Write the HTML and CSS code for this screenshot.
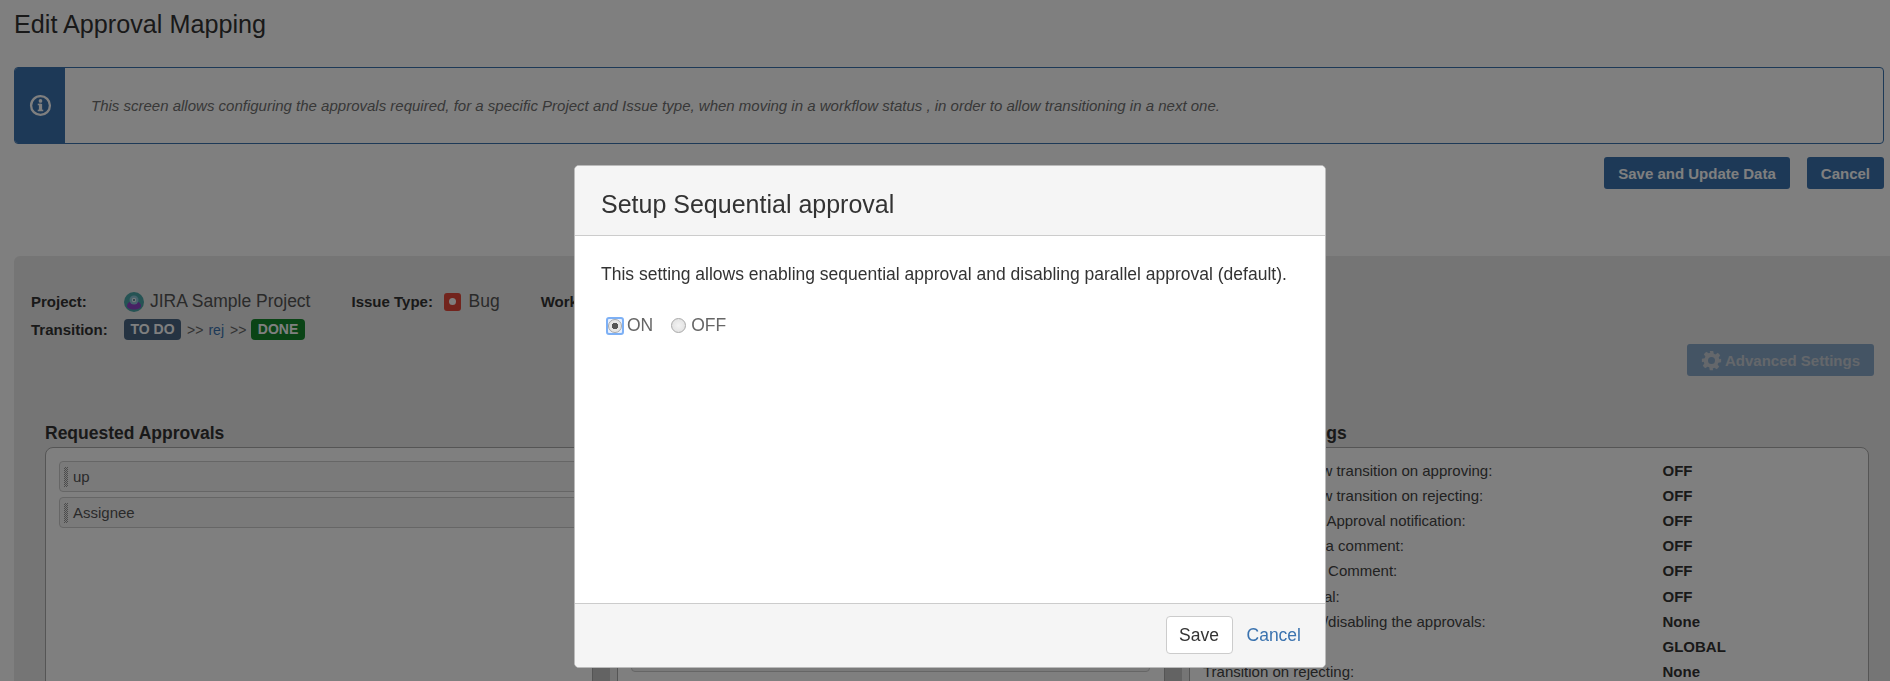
FILE: index.html
```html
<!DOCTYPE html>
<html lang="en">
<head>
<meta charset="utf-8">
<title>Edit Approval Mapping</title>
<link rel="stylesheet" href="styles.css">
</head>
<body>
<main class="page">
  <h1 class="page-title">Edit Approval Mapping</h1>
  <div class="info">
    <div class="info-icon">
      <svg width="23" height="23" viewBox="0 0 20 20"><circle cx="10" cy="10" r="8.2" fill="none" stroke="#fff" stroke-width="2"/><rect x="8.600" y="8.600" width="2.800" height="6" fill="#fff"/><rect x="7.600" y="8.400" width="3" height="1.400" fill="#fff"/><rect x="7.600" y="13.600" width="4.800" height="1.400" fill="#fff"/><circle cx="10" cy="6" r="1.600" fill="#fff"/></svg>
    </div>
    <p class="info-text">This screen allows configuring the approvals required, for a specific Project and Issue type, when moving in a workflow status , in order to allow transitioning in a next one.</p>
  </div>
  <div class="actions">
    <button class="btn-primary">Save and Update Data</button>
    <button class="btn-primary">Cancel</button>
  </div>
  <section class="panel">
    <div class="meta-row">
      <span class="meta-label label-project">Project:</span>
      <svg class="avatar" width="20" height="20" viewBox="0 0 20 20"><circle cx="10" cy="10" r="10" fill="#4aa6a8"/><path d="M3 14c0-3 3-5 7-5s7 2 7 5c0 2-3 3.500-7 3.500S3 16 3 14z" fill="#8e44c8"/><circle cx="10" cy="8" r="4.500" fill="#8fc6d8"/><circle cx="10" cy="8" r="2.200" fill="#e8f2f6"/><circle cx="10" cy="8" r="1" fill="#3f6d88"/></svg>
      <span class="meta-value">JIRA Sample Project</span>
      <span class="meta-label label-issue">Issue Type:</span>
      <span class="bug"><span class="bug-dot"></span></span>
      <span class="meta-value">Bug</span>
      <span class="meta-label label-work">Workflow:</span>
    </div>
    <div class="meta-row meta-row-second">
      <span class="meta-label label-project">Transition:</span>
      <span class="status status-todo">TO DO</span>
      <span class="arrows">&gt;&gt;</span>
      <a class="rej">rej</a>
      <span class="arrows">&gt;&gt;</span>
      <span class="status status-done">DONE</span>
    </div>
    <div class="adv-row">
      <button class="btn-adv">
        <svg width="21" height="21" viewBox="0 0 24 24"><path fill-rule="evenodd" d="M10 1h4l.6 3.200 1.900.8 2.700-1.800 2.800 2.800-1.800 2.700.8 1.900L23 10v4l-3.200.6-.8 1.900 1.800 2.700-2.800 2.800-2.700-1.800-1.900.8L14 23h-4l-.6-3.200-1.900-.8-2.700 1.800-2.800-2.800 1.800-2.700-.8-1.900L1 14v-4l3.200-.6.8-1.900-1.800-2.700 2.800-2.800 2.700 1.800 1.900-.8zM12 8a4 4 0 1 0 0 8 4 4 0 0 0 0-8z" fill="currentColor"/></svg>
        Advanced Settings
      </button>
    </div>
    <div class="columns">
      <div class="col col-side">
        <h3 class="col-title">Requested Approvals</h3>
        <div class="box">
          <div class="item"><span class="grip"></span>up</div>
          <div class="item"><span class="grip"></span>Assignee</div>
        </div>
      </div>
      <div class="strip"></div>
      <div class="col col-side">
        <div class="col-title"></div>
        <div class="box">
          <div class="item"></div>
          <div class="item"></div>
          <div class="item"></div>
          <div class="item"></div>
          <div class="item"></div>
          <div class="item"></div>
        </div>
      </div>
      <div class="strip"></div>
      <div class="col col-main">
        <h3 class="col-title col-title-right">Approval Settings</h3>
        <div class="box box-settings">
          <div class="setting"><span>Execute a workflow transition on approving:</span><b>OFF</b></div>
          <div class="setting"><span>Execute a workflow transition on rejecting:</span><b>OFF</b></div>
          <div class="setting"><span>Send out Request Approval notification:</span><b>OFF</b></div>
          <div class="setting"><span>Approver can add a comment:</span><b>OFF</b></div>
          <div class="setting"><span>Rejecting requires Comment:</span><b>OFF</b></div>
          <div class="setting"><span>Sequential approval:</span><b>OFF</b></div>
          <div class="setting"><span>Rules for enabling/disabling the approvals:</span><b>None</b></div>
          <div class="setting"><span>Scope:</span><b>GLOBAL</b></div>
          <div class="setting"><span>Transition on rejecting:</span><b>None</b></div>
        </div>
      </div>
    </div>
  </section>
</main>
<div class="overlay"></div>
<div class="modal">
  <header class="modal-head"><h2 class="modal-title">Setup Sequential approval</h2></header>
  <div class="modal-body">
    <p class="modal-text">This setting allows enabling sequential approval and disabling parallel approval (default).</p>
    <div class="radios">
      <label class="radio-label"><span class="radio-focus"><input class="radio" type="radio" name="seq" checked></span><span>ON</span></label>
      <label class="radio-label radio-off"><input class="radio" type="radio" name="seq"><span>OFF</span></label>
    </div>
  </div>
  <footer class="modal-foot">
    <button class="btn-save">Save</button>
    <a class="link-cancel">Cancel</a>
  </footer>
</div>
</body>
</html>
```
FILE: styles.css
```css
* { box-sizing: border-box; }
html, body { margin: 0; height: 681px; overflow: hidden; background: #fff; }
body { font-family: "Liberation Sans", Arial, sans-serif; font-size: 15px; color: #333; }
button { font-family: inherit; }

.page { padding-left: 14px; }
.page-title { margin: 10px 0 0; font-size: 25.2px; line-height: 28px; font-weight: 400; color: #333; }

.info { display: flex; height: 77px; margin: 29px 6px 0 0; border: 1px solid #3b73af; border-radius: 4px; overflow: hidden; }
.info-icon { width: 50px; background: #3b73af; display: flex; align-items: center; justify-content: center; }
.info-text { margin: 0; padding-left: 26px; align-self: center; font-size: 15px; font-style: italic; color: #707070; }

.actions { display: flex; justify-content: flex-end; gap: 17px; margin: 13px 6px 0 0; }
.btn-primary { height: 32px; padding: 0 14px; border: 0; border-radius: 3px; background: #3b73af; color: #fff; font-size: 15px; font-weight: 700; }

.panel { margin-top: 67px; height: 600px; padding: 33px 0 0 17px; background: #eaeaea; border-radius: 6px 0 0 0; }
.meta-row { display: flex; align-items: center; height: 25px; }
.meta-row-second { margin-top: 3px; }
.meta-label { font-weight: 700; color: #333; font-size: 15px; }
.label-project { width: 93px; }
.label-issue { margin-left: 41px; width: 93px; }
.label-work { margin-left: 41px; }
.avatar { margin-right: 6px; }
.meta-value { font-size: 17.5px; color: #555; }
.bug { width: 17px; height: 18px; margin-right: 7px; background: #e5493a; border-radius: 3px; display: flex; align-items: center; justify-content: center; }
.bug-dot { width: 7px; height: 7px; border-radius: 50%; background: #fff; }
.status { height: 21px; padding: 0 6.5px; line-height: 20px; border-radius: 4px; color: #fff; font-size: 14px; font-weight: 700; }
.status-todo { background: #4a6785; }
.status-done { background: #14892c; }
.arrows { margin: 0 5px 0 6px; color: #666; font-size: 14px; }
.rej { color: #3b73af; font-size: 14px; }

.adv-row { display: flex; justify-content: flex-end; margin: 0 16px 0 0; }
.btn-adv { display: flex; align-items: center; gap: 3px; height: 32px; margin-top: 2px; padding: 0 14px; border: 0; border-radius: 3px; background: #88a8c8; color: #c8cfd6; font-size: 15px; font-weight: 700; }

.columns { display: flex; margin: 47px 0 0 14px; align-items: flex-start; }
.col-side { width: 548px; flex: none; }
.col-main { width: 680px; flex: none; }
.col-title { margin: 0 0 4px; height: 20px; font-size: 17.5px; line-height: 20px; font-weight: 700; color: #333; }
.col-title-right { padding-left: 8px; }
.strip { width: 17px; flex: none; height: 400px; margin: 24px 7px 0 0; background: #c6c6c6; }
.box { height: 300px; padding: 13px 14px 0 13px; background: #fff; border: 1px solid #aaa; border-radius: 8px; }
.item { display: flex; align-items: center; height: 31px; margin-bottom: 5px; padding-left: 4px; border: 1px solid #ccc; border-radius: 4px; background: #f5f5f5; color: #555; font-size: 15px; }
.grip { width: 4px; height: 20px; margin-right: 5px; background: repeating-conic-gradient(#999 0 25%, transparent 0 50%) 0 0 / 2px 2px; }
.box-settings { padding: 10px 0 0 13px; }
.setting { display: flex; align-items: center; height: 25.1px; font-size: 15px; color: #444; }
.setting span { width: 459.5px; flex: none; }
.setting b { color: #333; }

.overlay { position: fixed; inset: 0; background: rgba(0, 0, 0, .5); }
.modal { position: fixed; left: 574px; top: 165px; width: 752px; height: 503px; display: flex; flex-direction: column; background: #fff; border: 1px solid #bbb; border-radius: 5px; overflow: hidden; }
.modal-head { height: 70px; padding: 6px 0 0 26px; display: flex; align-items: center; background: #f5f5f5; border-bottom: 1px solid #ccc; }
.modal-title { margin: 0; font-size: 25px; line-height: 28px; font-weight: 400; color: #333; }
.modal-body { flex: 1; padding: 27px 26px 0; }
.modal-text { margin: 0; font-size: 17.5px; line-height: 22px; color: #333; }
.radios { display: flex; align-items: center; margin: 30px 0 0 5px; gap: 18px; }
.radio-label { display: flex; align-items: center; gap: 3px; font-size: 17.5px; color: #666; }
.radio-focus { display: flex; align-items: center; justify-content: center; width: 18px; height: 18px; border: 2px solid #7db0f5; border-radius: 3px; background: #e8f0fe; }
.radio { appearance: none; display: block; width: 15px; height: 15px; margin: 0; border: 1px solid #a9a9a9; border-radius: 50%; background: radial-gradient(circle at 50% 50%, #f3f3f3, #ddd); }
.radio:checked { width: 14px; height: 14px; background: radial-gradient(circle, #555 0 3px, #e6e6e6 3.5px); }
.radio-off .radio { margin-right: 2px; }
.modal-foot { height: 64px; padding: 0 24px 1px 0; display: flex; align-items: center; justify-content: flex-end; gap: 14px; background: #f5f5f5; border-top: 1px solid #ccc; }
.btn-save { width: 67px; height: 38px; border: 1px solid #ccc; border-radius: 4px; background: #fff; color: #333; font-size: 17.5px; }
.link-cancel { color: #3b73af; font-size: 17.5px; }
```
